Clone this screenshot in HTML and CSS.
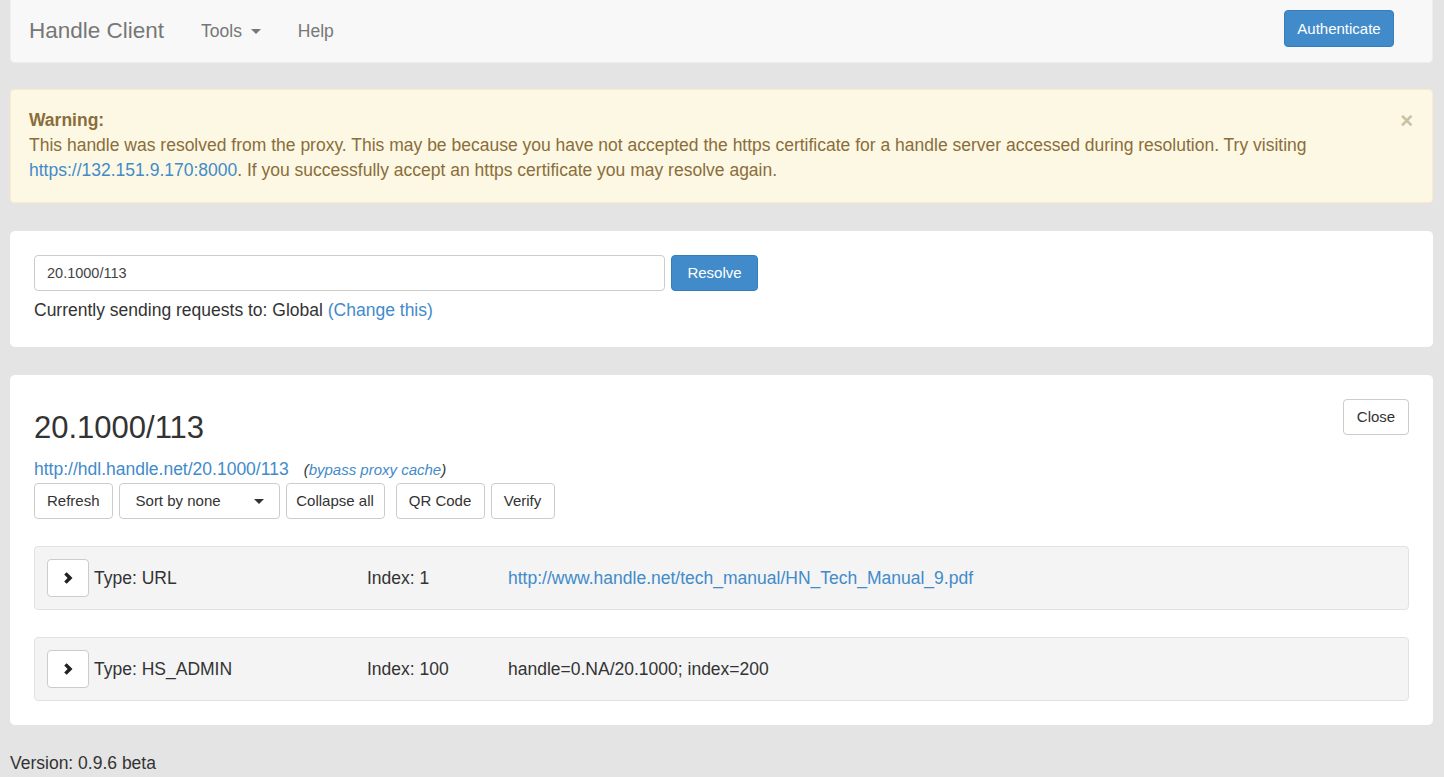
FILE: index.html
```html
<!DOCTYPE html>
<html>
<head>
<meta charset="utf-8">
<title>Handle Client</title>
<link rel="stylesheet" href="styles.css">
</head>
<body>
<div class="page">
  <nav class="navbar">
    <span class="brand">Handle Client</span>
    <ul class="nav">
      <li class="nav-link">Tools <span class="caret"></span></li>
      <li class="nav-link">Help</li>
    </ul>
    <button class="btn btn-primary btn-auth">Authenticate</button>
  </nav>

  <div class="alert">
    <span class="alert-close">&times;</span>
    <strong>Warning:</strong><br>
    This handle was resolved from the proxy. This may be because you have not accepted the https certificate for a handle server accessed during resolution. Try visiting <a class="link" href="#">https://132.151.9.170:8000</a>. If you successfully accept an https certificate you may resolve again.
  </div>

  <section class="panel panel-resolve">
    <div class="resolve-row">
      <div class="input">20.1000/113</div>
      <button class="btn btn-primary btn-resolve">Resolve</button>
    </div>
    <p class="sending">Currently sending requests to: Global <a class="link" href="#">(Change this)</a></p>
  </section>

  <section class="panel panel-record">
    <div class="record-head">
      <div class="record-title">
        <h3 class="handle">20.1000/113</h3>
        <div class="handle-links"><a class="link" href="#">http://hdl.handle.net/20.1000/113</a><span class="bypass">(<a class="link" href="#">bypass proxy cache</a>)</span></div>
      </div>
      <button class="btn btn-default">Close</button>
    </div>
    <div class="toolbar">
      <button class="btn btn-default">Refresh</button>
      <button class="btn btn-default btn-sort"><span>Sort by none</span><span class="caret caret-dark"></span></button>
      <button class="btn btn-default btn-collapse">Collapse all</button>
      <button class="btn btn-default btn-gap">QR Code</button>
      <button class="btn btn-default btn-verify">Verify</button>
    </div>

    <div class="value-row">
      <button class="btn-expand"><svg width="11" height="12" viewBox="0 0 11 12"><polygon points="1.2,2.6 3.7,0.2 9.5,6 3.7,11.8 1.2,9.4 4.6,6" fill="#222"/></svg></button>
      <span class="col-type">Type: URL</span>
      <span class="col-index">Index: 1</span>
      <a class="link col-value" href="#">http://www.handle.net/tech_manual/HN_Tech_Manual_9.pdf</a>
    </div>
    <div class="value-row">
      <button class="btn-expand"><svg width="11" height="12" viewBox="0 0 11 12"><polygon points="1.2,2.6 3.7,0.2 9.5,6 3.7,11.8 1.2,9.4 4.6,6" fill="#222"/></svg></button>
      <span class="col-type">Type: HS_ADMIN</span>
      <span class="col-index">Index: 100</span>
      <span class="col-value">handle=0.NA/20.1000; index=200</span>
    </div>
  </section>

  <footer class="version">Version: 0.9.6 beta</footer>
</div>
</body>
</html>
```

FILE: styles.css
```css
* { box-sizing: border-box; }
html, body { margin: 0; padding: 0; }
body {
  background: #e4e4e4;
  font-family: "Liberation Sans", Arial, sans-serif;
  font-size: 17.5px;
  line-height: 25px;
  color: #333;
}
.page { padding: 0 11px 0 10px; }
.link { color: #428bca; text-decoration: none; }

.navbar {
  display: flex;
  align-items: center;
  height: 63px;
  background: #f8f8f8;
  border: 1px solid #eeeeee;
  border-top: none;
  border-radius: 0 0 5px 5px;
  padding: 0 38px 0 18px;
}
.brand { font-size: 22.5px; color: #777; line-height: 30px; }
.nav { list-style: none; margin: 0 0 0 37px; padding: 0; display: flex; gap: 37px; flex: 1; }
.nav-link { color: #777; font-size: 17.5px; }
.caret {
  display: inline-block;
  width: 0; height: 0;
  border-top: 5px solid #777;
  border-left: 5px solid transparent;
  border-right: 5px solid transparent;
  vertical-align: middle;
  margin-left: 4px;
}
.caret-dark { border-top-color: #333; }

.btn {
  font-family: inherit;
  font-size: 15px;
  line-height: 22px;
  height: 36px;
  padding: 0 12px;
  border: 1px solid #ccc;
  border-radius: 4px;
  background: #fff;
  color: #333;
  cursor: pointer;
}
.btn-primary { background: #428bca; border-color: #357ebd; color: #fff; }
.btn-auth { height: 37px; width: 110px; padding: 0; align-self: flex-start; margin-top: 10px; }

.alert {
  position: relative;
  margin-top: 26px;
  background: #fcf8e3;
  border: 1px solid #faebcc;
  border-radius: 4px;
  color: #8a6d3b;
  padding: 18px 18px 19px;
}
.alert strong { font-weight: bold; }
.alert-close {
  position: absolute;
  right: 19px;
  top: 18px;
  font-size: 22px;
  font-weight: bold;
  color: #c7c1a8;
  line-height: 25px;
}

.panel {
  background: #fff;
  border-radius: 5px;
  margin-top: 28px;
  padding: 24px;
}
.resolve-row { display: flex; gap: 6px; }
.input {
  width: 631px;
  height: 36px;
  border: 1px solid #ccc;
  border-radius: 4px;
  font-size: 14.5px;
  line-height: 34px;
  padding: 0 12px;
  color: #444;
}
.btn-resolve { width: 87px; padding: 0; }
.sending { margin: 7px 0 0; }

.record-head { display: flex; justify-content: space-between; align-items: flex-start; }
.handle { font-size: 31px; font-weight: normal; line-height: 33px; margin: 12px 0 13px; }
.handle-links { line-height: 25px; }
.bypass { font-style: italic; font-size: 15px; margin-left: 15px; }
.record-head .btn { width: 66px; padding: 0; }

.toolbar { display: flex; gap: 6px; margin-top: 1px; }
.btn-sort {
  width: 161px;
  display: flex;
  align-items: center;
  justify-content: space-between;
  padding: 0 15px 0 16px;
}
.btn-collapse { width: 99px; padding: 0; }
.btn-gap { margin-left: 5px; width: 89px; padding: 0; }
.btn-verify { width: 64px; padding: 0; }

.value-row {
  display: flex;
  align-items: center;
  background: #f4f4f4;
  border: 1px solid #e2e2e2;
  border-radius: 4px;
  padding: 12px;
  height: 64px;
  margin-top: 27px;
}
.btn-expand {
  width: 42px;
  height: 38px;
  background: #fff;
  border: 1px solid #ccc;
  border-radius: 4px;
  display: flex;
  align-items: center;
  justify-content: center;
  padding: 0;
  margin-right: 5px;
}
.col-type { width: 273px; }
.col-index { width: 141px; }

.version { margin-top: 26px; line-height: 25px; }
```
